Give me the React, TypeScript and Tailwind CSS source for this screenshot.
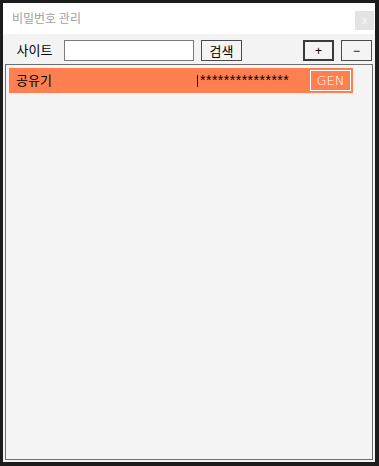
import React from 'react';

const KR = "font-['Noto_Sans_CJK_KR',sans-serif]";

const entries = [{ site: '공유기', password: '***************' }];

export default function App() {
  return (
    <div className="h-[466px] w-[379px] bg-[#1c1c1c] pb-[4px] pl-[3px] pr-[4px] pt-[3px]">
      <div className="flex h-full flex-col bg-white">
        {/* Title bar */}
        <div className="flex h-[31px] shrink-0 items-start justify-between pl-[9px] pr-[1px]">
          <span className={`${KR} mt-[7px] text-[12px] leading-[16px] text-[#a0a0a0]`}>비밀번호 관리</span>
          <div className="mt-[8px] flex h-[19px] w-[19px] items-center justify-center bg-[#e3e3e3] font-['Liberation_Sans',sans-serif] text-[10px] font-bold leading-none text-[#f4f4f4]">
            x
          </div>
        </div>

        {/* Body */}
        <div className="flex min-h-0 flex-1 flex-col bg-[#f3f3f3] px-[2px] pb-[2px]">
          {/* Toolbar */}
          <div className="flex h-[30px] shrink-0 items-start pt-[6px]">
            <div className={`${KR} flex h-[20px] w-[59px] items-center justify-center text-[13px] text-black`}>
              사이트
            </div>
            <input
              type="text"
              className="h-[21px] w-[130px] border border-[#7a7a7a] bg-white px-1 text-[13px] outline-none"
            />
            <button
              type="button"
              className={`${KR} ml-[7px] flex h-[21px] w-[41px] items-center justify-center border border-[#4a4a4a] bg-[#f4f4f4] text-[13px] text-black`}
            >
              검색
            </button>
            <div className="flex-1" />
            <button
              type="button"
              className="flex h-[21px] w-[31px] items-center justify-center border-2 border-[#3a3a3a] bg-[#f4f4f4] font-['Liberation_Sans',sans-serif] text-[12px] text-black"
            >
              +
            </button>
            <button
              type="button"
              className="ml-[7px] mr-[1px] flex h-[21px] w-[31px] items-center justify-center border border-[#4a4a4a] bg-[#f4f4f4] font-['Liberation_Sans',sans-serif] text-[12px] text-black"
            >
              −
            </button>
          </div>

          {/* List */}
          <div className="min-h-0 flex-1 border border-[#6f6f6f] bg-[#f4f4f4] pl-[3px] pt-[3px]">
            {entries.map((e) => (
              <div key={e.site} className="flex h-[25px] w-[344px] items-center bg-[#ff7f50]">
                <span className={`${KR} mb-[2px] w-[188px] pl-[7px] text-[13px] leading-none text-black`}>{e.site}</span>
                <div className="flex h-full flex-1 items-center">
                  <span className="h-[12px] w-px bg-black" />
                  <span className="ml-[2px] mb-[2px] font-['Liberation_Sans',sans-serif] text-[14px] leading-none tracking-[0.5px] text-black">
                    {e.password}
                  </span>
                </div>
                <div className="mr-[2px] flex h-[21px] w-[41px] items-center justify-center border border-white font-['DejaVu_Sans',sans-serif] text-[13px] font-extralight text-white">
                  GEN
                </div>
              </div>
            ))}
          </div>
        </div>
      </div>
    </div>
  );
}
